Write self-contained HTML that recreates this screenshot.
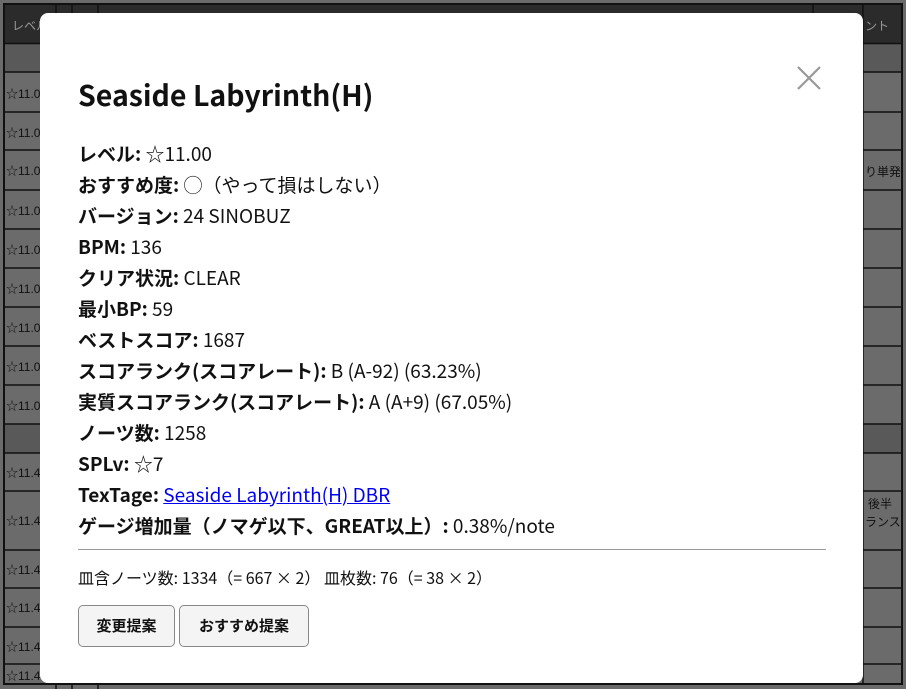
<!DOCTYPE html>
<html><head><meta charset="utf-8"><style>
html,body{margin:0;padding:0;width:906px;height:689px;overflow:hidden;background:#6b6b6b;font-family:"Noto Sans CJK JP","Liberation Sans",sans-serif}
.bg{position:absolute;left:0;top:0;width:906px;height:689px}
.modal{position:absolute;left:40px;top:13px;width:823px;height:670px;background:#fff;border-radius:8px}
h1{position:absolute;left:38px;top:62px;margin:0;font-size:28.5px;font-weight:700;color:#111;line-height:40px}
.x{position:absolute;left:756px;top:52px;width:26px;height:26px}
.info{position:absolute;left:38px;top:125px;font-size:19px;line-height:31px;color:#111;white-space:nowrap}
.info b{font-weight:700}
.info a{color:#0000ee;text-decoration:underline}
hr{position:absolute;left:38px;top:536px;width:748px;margin:0;border:0;border-top:1px solid #999}
.small{position:absolute;left:38px;top:552px;font-size:16px;line-height:24px;color:#111;white-space:nowrap}
.btn{position:absolute;top:592px;height:40px;border:1px solid #888;border-radius:5px;background:#f4f4f4;font-size:15px;font-weight:700;line-height:40px;text-align:center;color:#111}
</style></head><body>
<svg class="bg" width="906" height="689">
<rect x="4" y="4" width="898" height="680" fill="#6b6b6b" stroke="#111" stroke-width="2"/>
<rect x="5" y="5" width="896" height="38" fill="#2b2b2b"/>
<rect x="5" y="44" width="896" height="28" fill="#595959"/>
<rect x="5" y="424" width="896" height="29" fill="#595959"/>
<g stroke="#111" stroke-width="1.5">
<line x1="4" y1="43.5" x2="902" y2="43.5"/><line x1="4" y1="72" x2="902" y2="72"/><line x1="4" y1="112" x2="902" y2="112"/><line x1="4" y1="150" x2="902" y2="150"/><line x1="4" y1="190" x2="902" y2="190"/><line x1="4" y1="229" x2="902" y2="229"/><line x1="4" y1="268" x2="902" y2="268"/><line x1="4" y1="307" x2="902" y2="307"/><line x1="4" y1="346" x2="902" y2="346"/><line x1="4" y1="385" x2="902" y2="385"/><line x1="4" y1="424" x2="902" y2="424"/><line x1="4" y1="453" x2="902" y2="453"/><line x1="4" y1="491" x2="902" y2="491"/><line x1="4" y1="550" x2="902" y2="550"/><line x1="4" y1="588" x2="902" y2="588"/><line x1="4" y1="627" x2="902" y2="627"/><line x1="4" y1="664" x2="902" y2="664"/>
<line x1="56" y1="4" x2="56" y2="44"/><line x1="72" y1="4" x2="72" y2="44"/><line x1="98" y1="4" x2="98" y2="44"/><line x1="813" y1="4" x2="813" y2="684"/><line x1="863" y1="4" x2="863" y2="684"/>
<line x1="56" y1="683" x2="56" y2="689"/><line x1="72" y1="683" x2="72" y2="689"/><line x1="98" y1="683" x2="98" y2="689"/>
</g>
<g font-family="Liberation Sans, Noto Sans CJK JP, sans-serif" font-size="12" fill="#111">
<text x="6" y="98">☆11.0</text><text x="6" y="137">☆11.0</text><text x="6" y="175">☆11.0</text><text x="6" y="215">☆11.0</text><text x="6" y="254">☆11.0</text><text x="6" y="293">☆11.0</text><text x="6" y="332">☆11.0</text><text x="6" y="371">☆11.0</text><text x="6" y="410">☆11.0</text><text x="6" y="477">☆11.4</text><text x="6" y="525">☆11.4</text><text x="6" y="574">☆11.4</text><text x="6" y="612">☆11.4</text><text x="6" y="651">☆11.4</text><text x="6" y="680">☆11.4</text>
<text x="865" y="176">り単発</text><text x="868" y="508">後半</text><text x="865" y="526">ランス</text>
</g>
<text x="12" y="30" font-size="12" fill="#999" font-family="Noto Sans CJK JP,sans-serif">レベル</text>
<text x="865" y="30" font-size="12" fill="#999" font-family="Noto Sans CJK JP,sans-serif">ント</text>
</svg>
<div class="modal">
<h1>Seaside Labyrinth(H)</h1>
<svg class="x" viewBox="0 0 26 26"><path d="M2 2L24 24M24 2L2 24" stroke="#999" stroke-width="2.2"/></svg>
<div class="info">
<div><b>レベル:</b> ☆11.00</div>
<div><b>おすすめ度:</b> ◯（やって損はしない）</div>
<div><b>バージョン:</b> 24 SINOBUZ</div>
<div><b>BPM:</b> 136</div>
<div><b>クリア状況:</b> CLEAR</div>
<div><b>最小BP:</b> 59</div>
<div><b>ベストスコア:</b> 1687</div>
<div><b>スコアランク(スコアレート):</b> B (A-92) (63.23%)</div>
<div><b>実質スコアランク(スコアレート):</b> A (A+9) (67.05%)</div>
<div><b>ノーツ数:</b> 1258</div>
<div><b>SPLv:</b> ☆7</div>
<div><b>TexTage:</b> <a>Seaside Labyrinth(H) DBR</a></div>
<div><b>ゲージ増加量（ノマゲ以下、GREAT以上）:</b> 0.38%/note</div>
</div>
<hr>
<div class="small">皿含ノーツ数: 1334（= 667 × 2） 皿枚数: 76（= 38 × 2）</div>
<div class="btn" style="left:38px;width:95px">変更提案</div>
<div class="btn" style="left:139px;width:128px">おすすめ提案</div>
</div>
</body></html>
